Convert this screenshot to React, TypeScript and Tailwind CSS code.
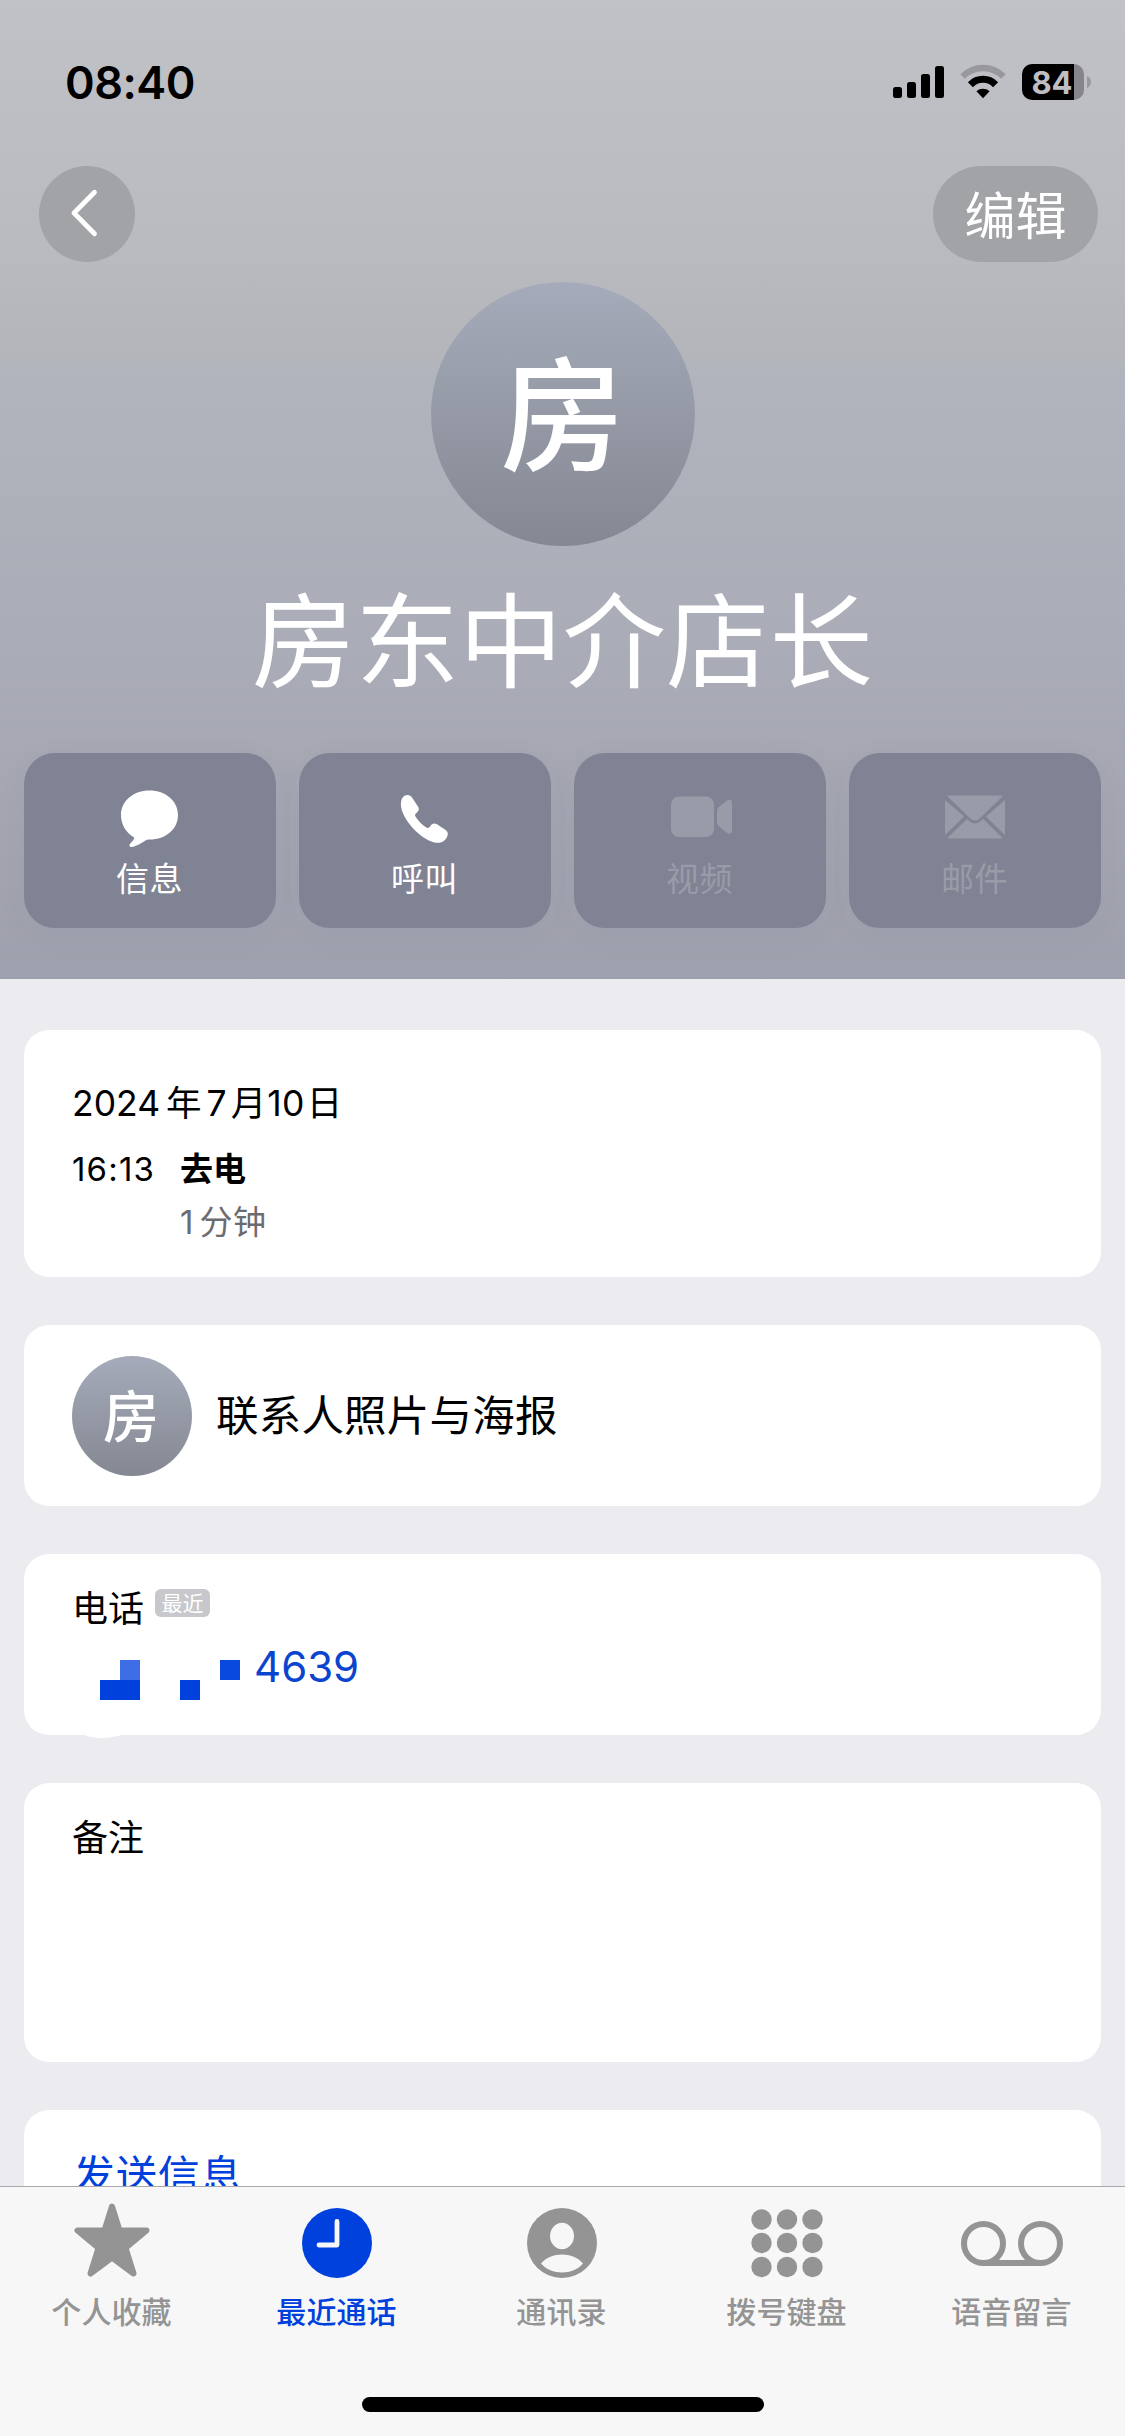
import type { ReactNode } from "react";

const FONT = "font-['Inter','Noto_Sans_CJK_SC',sans-serif]";

function StatusBar() {
  return (
    <div className="flex h-[166px] items-start justify-between pl-[65px] pr-[34px] pt-[64px] text-black">
      <span className="mt-[-4px] text-[45px] font-semibold leading-[46px] tracking-[-0.5px]">08:40</span>
      <div className="flex items-start">
        <svg width="52" height="36" viewBox="0 0 52 36">
          <rect x="0" y="23" width="9" height="11" rx="2.5" />
          <rect x="14" y="18" width="9" height="16" rx="2.5" />
          <rect x="28" y="10" width="9" height="24" rx="2.5" />
          <rect x="42" y="2" width="9" height="32" rx="2.5" />
        </svg>
        <svg className="ml-[15px]" width="46" height="36" viewBox="0 0 46 36" fill="none">
          <path d="M2.6 12.6 A28.6 28.6 0 0 1 43.4 12.6" stroke="#98989d" strokeWidth="6.4" />
          <path d="M10.4 20.7 A17.5 17.5 0 0 1 35.6 20.7" stroke="#000" strokeWidth="7" />
          <path d="M23 34.2 L16.4 27.3 A10 10 0 0 1 29.6 27.3 Z" fill="#000" />
        </svg>
        <div className="ml-[16px] flex h-[36px] items-center">
          <div className="flex h-[36px] w-[62px] items-center justify-center rounded-[10px] bg-[linear-gradient(to_right,#000_52px,#86868a_52px)] pr-[2px] text-[31px] font-bold leading-none text-[#bebec3]">
            84
          </div>
          <svg className="ml-[3px]" width="4" height="12" viewBox="0 0 4 12">
            <path d="M0 0 Q4 2 4 6 Q4 10 0 12 Z" fill="#98989d" />
          </svg>
        </div>
      </div>
    </div>
  );
}

function Action({ label, disabled, children }: { label: string; disabled?: boolean; children: ReactNode }) {
  return (
    <button
      className={`flex h-[175px] w-[252px] flex-col items-center rounded-[31px] bg-[#808393] pt-[33px] shadow-[0_8px_36px_rgba(60,64,90,0.04)] ${
        disabled ? "text-[#999ba8]" : "text-white"
      }`}
    >
      <svg width="70" height="64" viewBox="0 0 70 64" fill="currentColor">
        {children}
      </svg>
      <span className="mt-[9px] pr-[1px] text-[33px] font-normal leading-[40px] tracking-[0.4px]">{label}</span>
    </button>
  );
}

function Card({ className, children }: { className: string; children?: ReactNode }) {
  return <section className={`mx-[24px] rounded-[25px] bg-white pl-[48px] ${className}`}>{children}</section>;
}

function Tab({ label, active, children }: { label: string; active?: boolean; children: ReactNode }) {
  return (
    <div
      className={`flex w-[225px] flex-col items-center pr-[2px] pt-[13px] ${
        active ? "text-[#0040dd]" : "text-[#949494]"
      }`}
    >
      <svg width="110" height="86" viewBox="0 0 110 86" fill="currentColor">
        {children}
      </svg>
      <span className="mt-[3px] text-[30px] font-medium leading-[46px] tracking-[0.1px]">{label}</span>
    </div>
  );
}

export default function App() {
  return (
    <div className={`flex h-[2436px] w-[1125px] flex-col overflow-hidden bg-[#ebebf0] text-black ${FONT}`}>
      <header className="h-[979px] shrink-0 bg-[linear-gradient(to_bottom,#c1c2c6_0px,#bdbec3_130px,#b9babf_260px,#b5b6ba_340px,#b1b4bd_380px,#aaacb7_640px,#9fa0ad_979px)]">
        <StatusBar />
        <div className="flex h-[96px] items-center justify-between pl-[39px] pr-[27px]">
          <button className="flex h-[96px] w-[96px] items-center justify-center rounded-full bg-[#a2a3a7]">
            <svg width="96" height="96" viewBox="0 0 96 96" fill="none">
              <path d="M55.5 26.2 L35 47 L55.5 67.8" stroke="#fff" strokeWidth="4.8" strokeLinecap="round" strokeLinejoin="round" />
            </svg>
          </button>
          <button className="flex h-[96px] w-[165px] items-center justify-center rounded-full bg-[#a2a3a7] pt-[5px] text-[51px] leading-none text-white">
            编辑
          </button>
        </div>
        <div className="mx-auto mt-[20px] flex h-[264px] w-[264px] items-center justify-center rounded-full bg-[linear-gradient(to_bottom,#a5abba,#858892)] pt-[3px] text-[124px] font-medium leading-none text-white">
          房
        </div>
        <h1 className="mt-[37px] text-center text-[103.500px] font-normal leading-[120px] text-white">房东中介店长</h1>
        <div className="mt-[50px] flex justify-between px-[24px]">
          <Action label="信息">
            <path d="M34.500 4.500 C50.500 4.500 63 15 63 29 C63 43 51 53.500 34.500 53.500 C32.500 53.500 31.500 53.700 30 54.800 C26.500 57.200 20 60.700 17 61 C14.300 61.200 13.600 59.300 15.500 57.300 C17.500 55 20.500 52.300 18.500 51 C11 46.500 6 38.500 6 29 C6 15 18.500 4.500 34.500 4.500 Z" />
          </Action>
          <Action label="呼叫">
            <path d="M15 9.500 C18 8.300 20.500 9.300 22.200 11.800 L28.100 20.800 C29.500 23 28.800 25 26.800 26.700 C24.800 28.300 24.500 29 25.800 31 C28.500 35 32 38.800 36 41.300 C38 42.500 38.800 42 40.200 40.200 C42 37.200 44.300 36.700 47 38.300 L56 44.300 C58 46 58.500 48.500 57 51 C54.500 56.300 49.500 57.800 43.500 56.300 C30 52 15.500 36.500 11.800 24 C10 17.500 11 11.500 15 9.500 Z" />
          </Action>
          <Action label="视频" disabled>
            <rect x="6" y="10.500" width="43" height="40.500" rx="8" />
            <path d="M52 25 Q52 23 53.500 21.600 L62 14.500 Q66.500 12.500 67 16 V45.500 Q66.500 49 62 47 L53.500 39.900 Q52 38.500 52 36.500 Z" />
          </Action>
          <Action label="邮件" disabled>
            <path d="M7 10 Q8 9.500 10 9.500 H60 Q62 9.500 63 10 L40 32 Q35 37 30 32 Z" />
            <path d="M5 14 L24 30.500 L5 49 Z" />
            <path d="M65 14 L46 30.500 L65 49 Z" />
            <path d="M27 33 L28.500 34.500 Q35 40.500 41.500 34.500 L43 33 L62.500 52 Q61.500 52.500 60 52.500 H10 Q8.500 52.500 7.500 52 Z" />
          </Action>
        </div>
      </header>

      <main className="flex h-[1207px] shrink-0 flex-col overflow-hidden">
        <Card className="mt-[51px] h-[247px] shrink-0 pt-[51px]">
          <div className="flex text-[35.500px] leading-[46px]">
            <span className="tracking-[0px]">2024</span>
            <span className="ml-[6px]">年</span>
            <span className="ml-[5px]">7</span>
            <span className="ml-[4px]">月</span>
            <span className="ml-[1px] tracking-[0.3px]">10</span>
            <span className="ml-[2px]">日</span>
          </div>
          <div className="mt-[20px] flex text-[33px] leading-[44px]">
            <span className="w-[108px] tracking-[1.2px]">16:13</span>
            <span className="font-bold">去电</span>
          </div>
          <div className="ml-[108px] mt-[9px] text-[33px] leading-[44px] text-[#6c6c70]">
            1<span className="ml-[6px] tracking-[0.5px]">分钟</span>
          </div>
        </Card>

        <Card className="mt-[48px] flex h-[181px] shrink-0 items-center">
          <div className="flex h-[120px] w-[120px] items-center justify-center rounded-full bg-[linear-gradient(to_bottom,#a5abba,#858892)] pr-[2px] pt-[2px] text-[56px] font-medium leading-none text-white">
            房
          </div>
          <span className="ml-[24px] text-[42.500px] leading-[50px] tracking-[0.2px]">联系人照片与海报</span>
        </Card>

        <Card className="relative mt-[48px] h-[181px] shrink-0 pt-[32px]">
          <div className="flex items-start">
            <span className="text-[36px] leading-[46px]">电话</span>
            <span className="ml-[11px] mt-[3px] flex h-[28px] w-[55px] items-center justify-center rounded-[6px] bg-[#c7c7cc] pt-[1px] text-[21px] leading-none text-white">
              最近
            </span>
          </div>
          <div className="mt-[5px] flex h-[60px] items-center">
            <svg width="182" height="40" viewBox="0 0 182 40" className="mt-[26px]" shapeRendering="crispEdges">
              <rect x="48" y="0" width="20" height="20" fill="#3d6ee6" />
              <rect x="28" y="20" width="40" height="20" fill="#0040dd" />
              <rect x="108" y="20" width="20" height="20" fill="#0040dd" />
              <rect x="148" y="0" width="20" height="20" fill="#0a49df" />
            </svg>
            <span className="text-[42px] leading-[50px] text-[#0b45cf]">4639</span>
          </div>
          <svg className="absolute left-[60px] top-[181px]" width="38" height="4" viewBox="0 0 38 4">
            <path d="M0 0 Q16 6 38 0 Z" fill="#fff" />
          </svg>
        </Card>

        <Card className="mt-[48px] h-[279px] shrink-0 pt-[32px]">
          <span className="block text-[36px] leading-[46px]">备注</span>
        </Card>

        <Card className="mt-[48px] h-[181px] shrink-0 pt-[41px]">
          <span className="block pl-[1px] text-[42px] leading-[50px] tracking-[0.4px] text-[#0040dd]">发送信息</span>
        </Card>
      </main>

      <nav className="flex h-[250px] shrink-0 flex-col items-center border-t border-[#a9a9ad] bg-[#f7f7f8]">
        <div className="flex">
          <Tab label="个人收藏">
            <path
              d="M55 6.500 L62.500 30.500 H89.500 L68.500 48 L76.500 73.500 L55 57.500 L33.500 73.500 L41.500 48 L20.500 30.500 H47.500 Z"
              stroke="currentColor"
              strokeWidth="6"
              strokeLinejoin="round"
            />
          </Tab>
          <Tab label="最近通话" active>
            <circle cx="55" cy="43" r="35" />
            <path d="M55 21.500 V45 H37" fill="none" stroke="#f7f7f8" strokeWidth="4.800" strokeLinecap="round" strokeLinejoin="round" />
          </Tab>
          <Tab label="通讯录">
            <circle cx="55" cy="43" r="35" />
            <ellipse cx="55" cy="36" rx="12" ry="13.200" fill="#f7f7f8" />
            <path d="M34 63.500 C44 51.500 66 51.500 76 63.500 C66 75.500 44 75.500 34 63.500 Z" fill="#f7f7f8" />
          </Tab>
          <Tab label="拨号键盘">
            {[29.5, 55, 80.5].map((x) =>
              [19.5, 43, 67].map((y) => <circle key={`${x}-${y}`} cx={x} cy={y} r="10.200" />),
            )}
          </Tab>
          <Tab label="语音留言">
            <g fill="none" stroke="currentColor" strokeWidth="6">
              <circle cx="26.500" cy="43.500" r="19.500" />
              <circle cx="83.500" cy="43.500" r="19.500" />
              <path d="M26.500 63 H83.500" />
            </g>
          </Tab>
        </div>
        <div className="mt-[62px] h-[15px] w-[402px] rounded-full bg-black" />
      </nav>
    </div>
  );
}
